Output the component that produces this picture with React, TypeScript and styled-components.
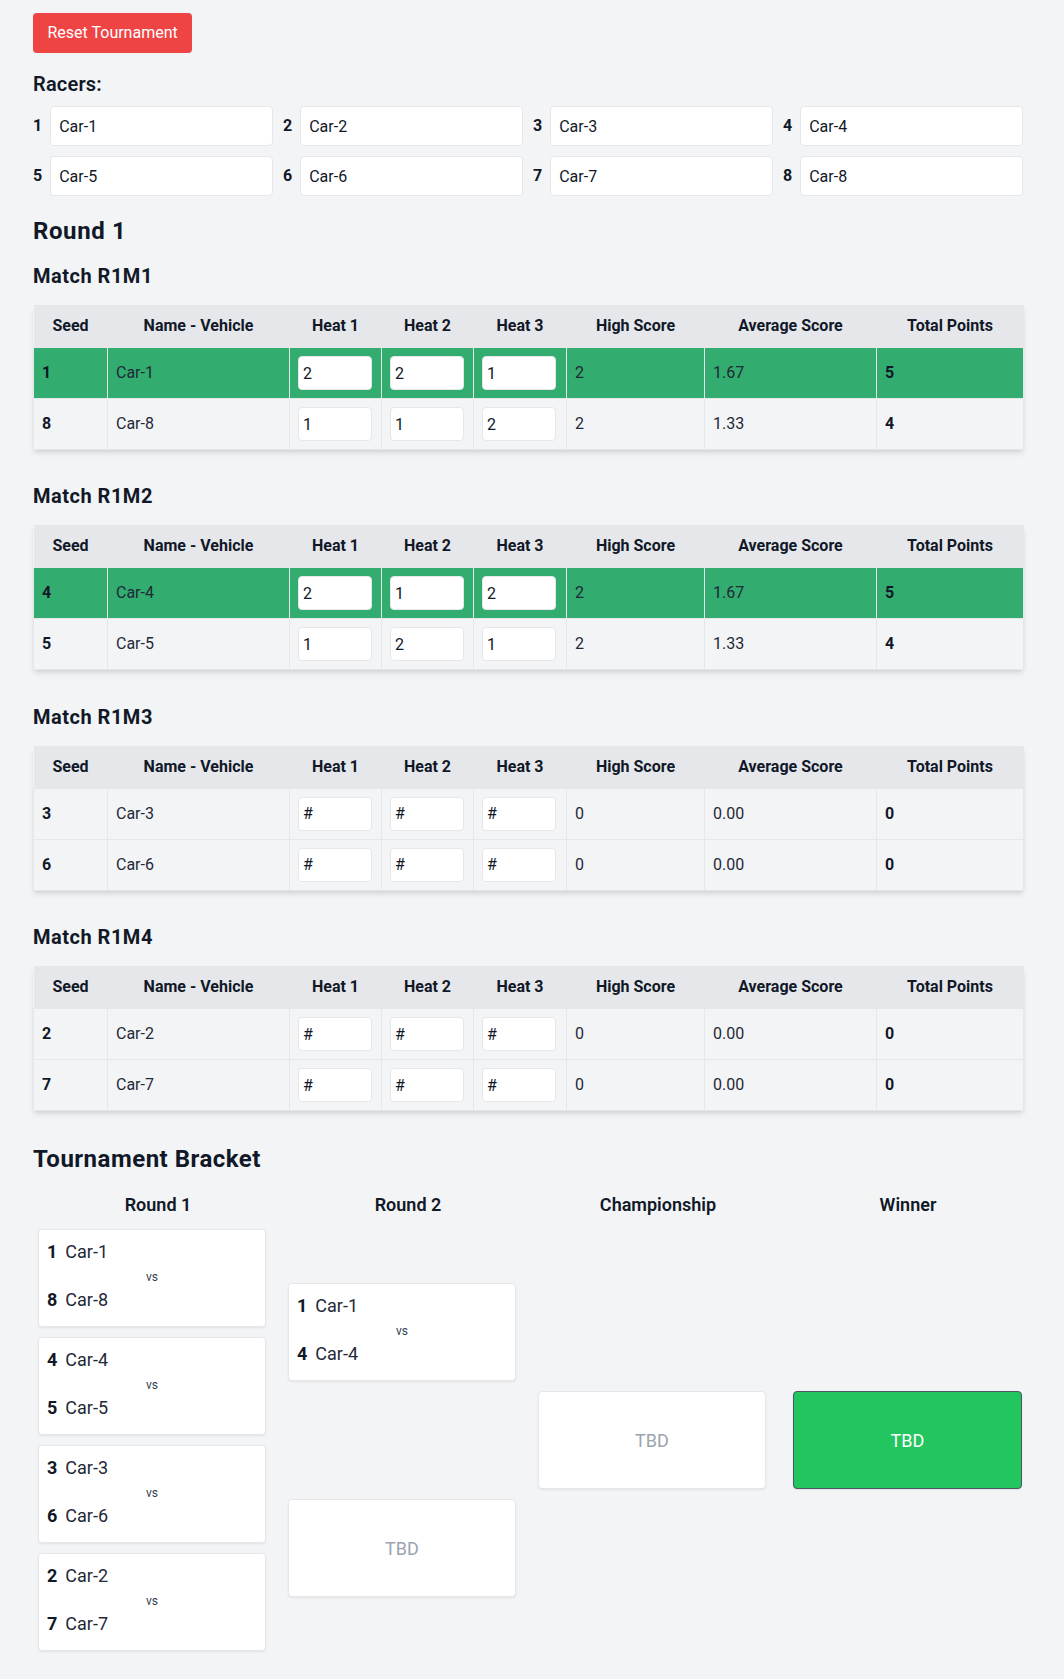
import React from 'react';
import styled, { createGlobalStyle } from 'styled-components';

const GlobalStyle = createGlobalStyle`
  * {
    box-sizing: border-box;
  }
  body {
    margin: 0;
    background: #f3f4f6;
    color: #111827;
    font-family: "Segoe UI", Roboto, "Noto Sans", sans-serif;
    font-size: 16px;
    line-height: 24px;
  }
`;

const Page = styled.div`
  padding: 13px 41px 28px 33px;
`;

const ResetButton = styled.button`
  display: block;
  background: #ef4444;
  color: #fff;
  border: none;
  border-radius: 4px;
  padding: 8px 14.5px;
  font: inherit;
  cursor: pointer;
`;

const RacersTitle = styled.h2`
  margin: 17px 0 8px;
  font-size: 20px;
  line-height: 28px;
  font-weight: 600;
  letter-spacing: 0.2px;
`;

const RacerGrid = styled.div`
  display: grid;
  grid-template-columns: repeat(4, 1fr);
  gap: 10px;
`;

const RacerCell = styled.label`
  display: flex;
  align-items: center;
  gap: 8px;
  font-weight: 700;
`;

const RacerInput = styled.input`
  flex: 1;
  min-width: 0;
  height: 40px;
  padding: 0 8px;
  border: 1px solid #e5e7eb;
  border-radius: 4px;
  background: #fff;
  font: inherit;
  font-weight: 400;
  color: #111827;
`;

const RoundTitle = styled.h2`
  margin: 19px 0 14px;
  font-size: 24px;
  line-height: 32px;
  font-weight: 700;
  letter-spacing: 0.6px;
`;

const MatchTitle = styled.h3`
  margin: 0 0 15px;
  padding-top: 1px;
  font-size: 20px;
  line-height: 28px;
  font-weight: 700;
  letter-spacing: 0.5px;
`;

const Table = styled.table`
  width: 100%;
  table-layout: fixed;
  border-collapse: collapse;
  margin-bottom: 31.4px;
  box-shadow: 0 4px 6px -1px rgba(0, 0, 0, 0.1), 0 2px 4px -2px rgba(0, 0, 0, 0.1);
`;

const Th = styled.th`
  background: #e5e7eb;
  padding: 9px 8px;
  font-weight: 700;
  text-align: center;
  white-space: nowrap;
`;

const Row = styled.tr<{ $winner?: boolean }>`
  background: ${(p) => (p.$winner ? '#32ad6f' : '#f3f4f6')};
  color: #1f2937;
`;

const Td = styled.td<{ $bold?: boolean }>`
  height: 50px;
  padding: 8px;
  border: 1px solid #e5e7eb;
  font-weight: ${(p) => (p.$bold ? 700 : 400)};
  color: ${(p) => (p.$bold ? '#111827' : 'inherit')};
`;

const HeatInput = styled.input`
  display: block;
  width: 74px;
  height: 34px;
  padding: 0 4px;
  border: 1px solid #e5e7eb;
  border-radius: 4px;
  background: #fff;
  font: inherit;
  color: #111827;
  &::placeholder {
    color: #111827;
    opacity: 1;
  }
`;

const BracketTitle = styled.h2`
  margin: 0 0 16px;
  font-size: 24px;
  line-height: 32px;
  font-weight: 700;
  letter-spacing: 0.5px;
`;

const Bracket = styled.div`
  display: flex;
  width: 1000px;
`;

const Column = styled.div`
  width: 250px;
  flex: none;
  display: flex;
  flex-direction: column;
`;

const ColumnTitle = styled.h3`
  margin: 0 0 10px;
  font-size: 18px;
  line-height: 28px;
  font-weight: 600;
  text-align: center;
`;

const ColumnBody = styled.div<{ $last?: boolean }>`
  flex: 1;
  display: flex;
  flex-direction: column;
  gap: 10px;
  padding: ${(p) => (p.$last ? '0 11px 0 10px' : '0 17px 0 5px')};
`;

const Slot = styled.div`
  flex: 1;
  display: flex;
  flex-direction: column;
  justify-content: center;
  gap: 10px;
`;

const Card = styled.div<{ $winner?: boolean }>`
  height: 98px;
  border-radius: 4px;
  background: ${(p) => (p.$winner ? '#22c55e' : '#fff')};
  border: 1px solid ${(p) => (p.$winner ? '#4b5563' : '#e5e7eb')};
  box-shadow: 0 1px 2px rgba(0, 0, 0, 0.08);
`;

const MatchCard = styled(Card)`
  padding: 8px 8px 12px;
`;

const Entry = styled.div`
  display: flex;
  font-size: 18px;
  line-height: 28px;
  color: #1f2937;
`;

const EntrySeed = styled.span`
  font-weight: 700;
  color: #111827;
  margin-right: 8px;
`;

const Vs = styled.div`
  margin: 3px 0 1px;
  font-size: 12px;
  line-height: 16px;
  text-align: center;
  color: #374151;
`;

const TbdCard = styled(Card)`
  display: flex;
  align-items: center;
  justify-content: center;
  padding-top: 2px;
  font-size: 18px;
  line-height: 28px;
  color: ${(p) => (p.$winner ? '#fff' : '#9ca3af')};
`;

type Racer = { seed: number; name: string };
type MatchRow = { racer: Racer; heats: string[]; high: string; avg: string; total: string };
type Match = { id: string; rows: MatchRow[]; winner?: number };

const racers: Racer[] = [1, 2, 3, 4, 5, 6, 7, 8].map((n) => ({ seed: n, name: `Car-${n}` }));
const r = (n: number) => racers[n - 1];

const matches: Match[] = [
  {
    id: 'R1M1',
    winner: 0,
    rows: [
      { racer: r(1), heats: ['2', '2', '1'], high: '2', avg: '1.67', total: '5' },
      { racer: r(8), heats: ['1', '1', '2'], high: '2', avg: '1.33', total: '4' },
    ],
  },
  {
    id: 'R1M2',
    winner: 0,
    rows: [
      { racer: r(4), heats: ['2', '1', '2'], high: '2', avg: '1.67', total: '5' },
      { racer: r(5), heats: ['1', '2', '1'], high: '2', avg: '1.33', total: '4' },
    ],
  },
  {
    id: 'R1M3',
    rows: [
      { racer: r(3), heats: ['', '', ''], high: '0', avg: '0.00', total: '0' },
      { racer: r(6), heats: ['', '', ''], high: '0', avg: '0.00', total: '0' },
    ],
  },
  {
    id: 'R1M4',
    rows: [
      { racer: r(2), heats: ['', '', ''], high: '0', avg: '0.00', total: '0' },
      { racer: r(7), heats: ['', '', ''], high: '0', avg: '0.00', total: '0' },
    ],
  },
];

const columnWidths = [74, 182, 92, 92, 93, 138, 172, 147];
const headers = ['Seed', 'Name - Vehicle', 'Heat 1', 'Heat 2', 'Heat 3', 'High Score', 'Average Score', 'Total Points'];

function MatchTable({ match }: { match: Match }) {
  return (
    <>
      <MatchTitle>Match {match.id}</MatchTitle>
      <Table>
        <colgroup>
          {columnWidths.map((w, i) => (
            <col key={i} style={{ width: w }} />
          ))}
        </colgroup>
        <thead>
          <tr>
            {headers.map((h) => (
              <Th key={h}>{h}</Th>
            ))}
          </tr>
        </thead>
        <tbody>
          {match.rows.map((row, i) => (
            <Row key={row.racer.seed} $winner={match.winner === i}>
              <Td $bold>{row.racer.seed}</Td>
              <Td>{row.racer.name}</Td>
              {row.heats.map((h, j) => (
                <Td key={j}>
                  <HeatInput defaultValue={h} placeholder="#" />
                </Td>
              ))}
              <Td>{row.high}</Td>
              <Td>{row.avg}</Td>
              <Td $bold>{row.total}</Td>
            </Row>
          ))}
        </tbody>
      </Table>
    </>
  );
}

function Pairing({ a, b }: { a: Racer; b: Racer }) {
  return (
    <MatchCard>
      <Entry>
        <EntrySeed>{a.seed}</EntrySeed>
        {a.name}
      </Entry>
      <Vs>vs</Vs>
      <Entry>
        <EntrySeed>{b.seed}</EntrySeed>
        {b.name}
      </Entry>
    </MatchCard>
  );
}

export default function App() {
  return (
    <Page>
      <GlobalStyle />
      <ResetButton>Reset Tournament</ResetButton>

      <RacersTitle>Racers:</RacersTitle>
      <RacerGrid>
        {racers.map((racer) => (
          <RacerCell key={racer.seed}>
            {racer.seed}
            <RacerInput defaultValue={racer.name} />
          </RacerCell>
        ))}
      </RacerGrid>

      <RoundTitle>Round 1</RoundTitle>
      {matches.map((m) => (
        <MatchTable key={m.id} match={m} />
      ))}

      <BracketTitle>Tournament Bracket</BracketTitle>
      <Bracket>
        <Column>
          <ColumnTitle>Round 1</ColumnTitle>
          <ColumnBody>
            <Slot>
              <Pairing a={r(1)} b={r(8)} />
              <Pairing a={r(4)} b={r(5)} />
            </Slot>
            <Slot>
              <Pairing a={r(3)} b={r(6)} />
              <Pairing a={r(2)} b={r(7)} />
            </Slot>
          </ColumnBody>
        </Column>
        <Column>
          <ColumnTitle>Round 2</ColumnTitle>
          <ColumnBody>
            <Slot>
              <Pairing a={r(1)} b={r(4)} />
            </Slot>
            <Slot>
              <TbdCard>TBD</TbdCard>
            </Slot>
          </ColumnBody>
        </Column>
        <Column>
          <ColumnTitle>Championship</ColumnTitle>
          <ColumnBody>
            <Slot>
              <TbdCard>TBD</TbdCard>
            </Slot>
          </ColumnBody>
        </Column>
        <Column>
          <ColumnTitle>Winner</ColumnTitle>
          <ColumnBody $last>
            <Slot>
              <TbdCard $winner>TBD</TbdCard>
            </Slot>
          </ColumnBody>
        </Column>
      </Bracket>
    </Page>
  );
}
